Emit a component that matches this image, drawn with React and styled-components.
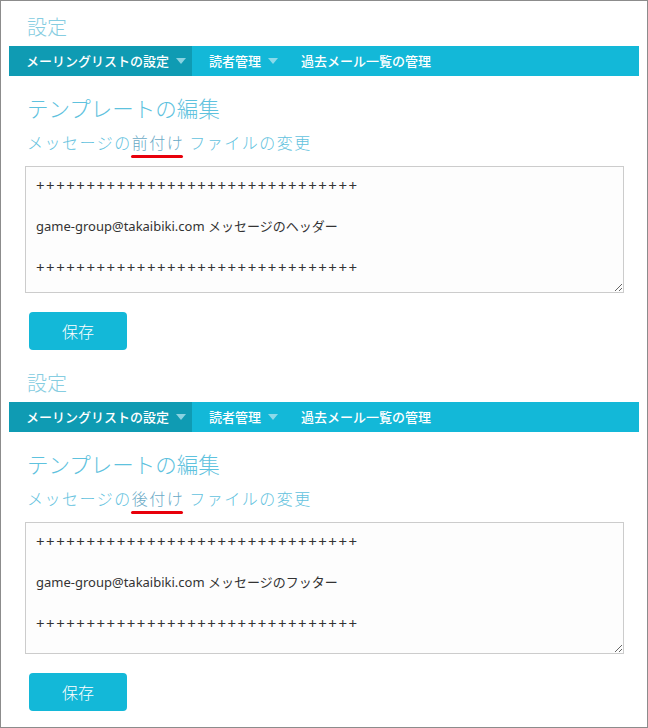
import React from "react";
import styled, { createGlobalStyle } from "styled-components";

const GlobalStyle = createGlobalStyle`
  html, body {
    margin: 0;
    padding: 0;
    background: #ffffff;
  }
  body {
    font-family: "Noto Sans CJK JP", "Noto Sans", sans-serif;
  }
`;

const PLUS = "+".repeat(32);

const SECTIONS = [
  { word: "前付け", label: "ヘッダー", height: 127 },
  { word: "後付け", label: "フッター", height: 132 },
];

const App = () => {
  return (
    <>
      <GlobalStyle />
      <Frame>
        {SECTIONS.map((s) => (
          <Section key={s.word}>
            <PageTitle>設定</PageTitle>
            <NavBar>
              <NavItem $active>
                メーリングリストの設定
                <Caret />
              </NavItem>
              <NavItem>
                読者管理
                <Caret />
              </NavItem>
              <NavItem>過去メール一覧の管理</NavItem>
            </NavBar>
            <Heading>テンプレートの編集</Heading>
            <SubHeading>
              メッセージの<Marked>{s.word}</Marked> ファイルの変更
            </SubHeading>
            <Editor role="textbox" $height={s.height}>
              <PlusLine>{PLUS}</PlusLine>
              <Line>&nbsp;</Line>
              <Line>game-group@takaibiki.com メッセージの{s.label}</Line>
              <Line>&nbsp;</Line>
              <PlusLine>{PLUS}</PlusLine>
            </Editor>
            <SaveButton>保存</SaveButton>
          </Section>
        ))}
      </Frame>
    </>
  );
};

const Frame = styled.div`
  box-sizing: border-box;
  width: 648px;
  height: 728px;
  border: 1px solid #8c8c8c;
  padding: 0 8px;
  overflow: hidden;
`;

const Section = styled.section`
  display: flex;
  flex-direction: column;
  align-items: flex-start;
  padding: 14px 0 7px;
`;

const PageTitle = styled.h1`
  margin: 0 0 0 18px;
  font-size: 20px;
  line-height: 24px;
  font-weight: 300;
  color: #86cde1;
`;

const NavBar = styled.nav`
  align-self: stretch;
  display: flex;
  height: 30px;
  margin-top: 7px;
  background: #13b8d8;
`;

const NavItem = styled.div`
  display: flex;
  align-items: center;
  padding: 0 6px 0 17px;
  background: ${(p) => (p.$active ? "#0f9bb3" : "transparent")};
  color: #ffffff;
  font-size: 13px;
  font-weight: 500;
  line-height: 28px;
  white-space: nowrap;
`;

const Caret = styled.span`
  width: 0;
  height: 0;
  margin-left: 7px;
  border-left: 5.5px solid transparent;
  border-right: 5.5px solid transparent;
  border-top: 6px solid rgba(180, 230, 240, 0.75);
`;

const Heading = styled.h2`
  margin: 19px 0 0 18px;
  font-size: 21.5px;
  line-height: 26px;
  font-weight: 300;
  color: #5ec2de;
`;

const SubHeading = styled.h3`
  margin: 10px 0 0 18px;
  font-size: 16px;
  line-height: 22px;
  font-weight: 300;
  letter-spacing: 1.5px;
  color: #62c2de;
`;

const Marked = styled.span`
  position: relative;
  color: #6aaac6;

  &::after {
    content: "";
    position: absolute;
    left: -1px;
    right: 1px;
    bottom: -4px;
    height: 3px;
    border-radius: 2px;
    background: #e8000b;
  }
`;

const Editor = styled.div`
  box-sizing: border-box;
  width: 599px;
  height: ${(p) => p.$height}px;
  margin: 13px 0 0 16px;
  padding: 8px 10px;
  border: 1px solid #cccccc;
  background: #fdfdfd;
  font-family: "Noto Sans", "Noto Sans CJK JP", sans-serif;
  font-size: 13px;
  line-height: 20.5px;
  color: #333333;
  resize: vertical;
  overflow: auto;
`;

const Line = styled.div`
  white-space: pre;
`;

const PlusLine = styled(Line)`
  font-size: 15px;
  letter-spacing: 1.5px;
`;

const SaveButton = styled.button`
  width: 98px;
  height: 38px;
  margin: 19px 0 0 20px;
  border: none;
  border-radius: 4px;
  background: #13b8d8;
  color: #ffffff;
  font-family: "Noto Sans CJK JP", sans-serif;
  font-size: 16px;
  font-weight: 300;
  cursor: pointer;
`;

export default App;
